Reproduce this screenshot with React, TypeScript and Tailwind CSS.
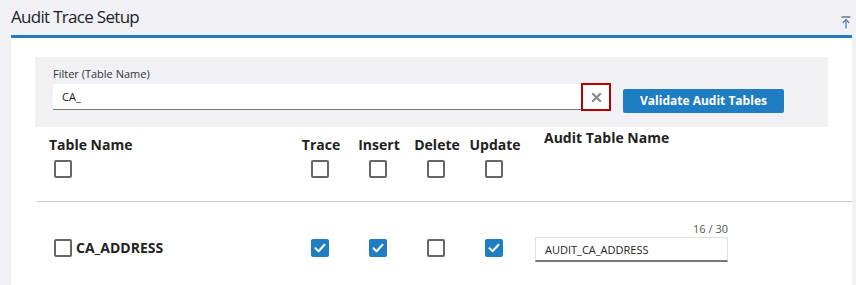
import { useState } from 'react'

const FONT = "font-['Open_Sans','Noto_Sans',sans-serif]"

function Checkbox({ checked, onChange }: { checked: boolean; onChange: () => void }) {
  return (
    <button
      type="button"
      onClick={onChange}
      className={
        checked
          ? 'flex h-[18px] w-[18px] items-center justify-center rounded-[2px] bg-[#1f7dc1]'
          : 'h-[18px] w-[18px] rounded-[2px] border-2 border-[#666666] bg-white'
      }
    >
      {checked && (
        <svg width="14" height="14" viewBox="0 0 14 14" fill="none">
          <path d="M2.5 7.2 L5.6 10.2 L11.5 3.8" stroke="white" strokeWidth="2" strokeLinecap="round" strokeLinejoin="round" />
        </svg>
      )}
    </button>
  )
}

const FLAGS = ['Trace', 'Insert', 'Delete', 'Update'] as const

export default function App() {
  const [filter, setFilter] = useState('CA_')
  const [headerAll, setHeaderAll] = useState([false, false, false, false])
  const [rowSelected, setRowSelected] = useState(false)
  const [flags, setFlags] = useState([true, true, false, true])
  const [auditName, setAuditName] = useState('AUDIT_CA_ADDRESS')
  const [allSelected, setAllSelected] = useState(false)

  return (
    <div className={`${FONT} h-[285px] w-[856px] overflow-hidden bg-[#f0f0f5] pl-[11px] pr-[4px] text-[#222]`}>
      {/* Title bar */}
      <div className="flex h-[35px] items-start justify-between">
        <h1 className="pt-[5px] text-[17px] leading-[24px] font-medium tracking-[-0.7px] text-[#1e1e1e]">Audit Trace Setup</h1>
        <svg className="mt-[16px] mr-[1px]" width="10" height="13" viewBox="0 0 10 13" fill="none">
          <path d="M0.5 1 H9.5" stroke="#555" strokeWidth="1.2" />
          <path d="M5 3.5 V12.5" stroke="#3a7fb5" strokeWidth="1.2" />
          <path d="M1.8 7 L5 3.6 L8.2 7" stroke="#3a7fb5" strokeWidth="1.2" fill="none" />
        </svg>
      </div>

      {/* Panel */}
      <div className="h-[250px] border-t-[3px] border-[#1f7dc1] bg-white pt-[19px]">
        {/* Filter box */}
        <div className="ml-[24px] w-[793px] bg-[#f0f0f5] pt-[9px] pb-[14px] pl-[18px]">
          <div className="text-[11px] leading-[15px] text-[#333]">Filter (Table Name)</div>
          <div className="mt-[2px] flex items-start">
            <input
              value={filter}
              onChange={(e) => setFilter(e.target.value)}
              className="mt-[1px] h-[26px] w-[528px] border-b border-[#777] bg-white pl-[9px] text-[11px] text-[#222] outline-none"
            />
            <button
              type="button"
              onClick={() => setFilter('')}
              className="flex h-[28px] w-[30px] items-center justify-center border-2 border-[#b80000] bg-white"
            >
              <svg width="11" height="11" viewBox="0 0 11 11">
                <path d="M1.2 1.2 L9.8 9.8 M9.8 1.2 L1.2 9.8" stroke="#8a8a8a" strokeWidth="2.2" />
              </svg>
            </button>
            <button
              type="button"
              className="mt-[6px] ml-[12px] h-[24px] w-[161px] rounded-[2px] bg-[#1f7dc1] text-[12px] font-bold text-white"
            >
              Validate Audit Tables
            </button>
          </div>
        </div>

        {/* Header row */}
        <div className="flex h-[74px] pt-[8px]">
          <div className="w-[281px] pl-[38px]">
            <div className="text-[14px] leading-[20px] font-bold">Table Name</div>
            <div className="mt-[3px] pl-[5px]">
              <Checkbox checked={allSelected} onChange={() => setAllSelected(!allSelected)} />
            </div>
          </div>
          {FLAGS.map((f, i) => (
            <div key={f} className="flex w-[58px] flex-col items-center">
              <div className="text-[14px] leading-[20px] font-bold">{f}</div>
              <div className="mt-[3px] pr-[2px]">
                <Checkbox
                  checked={headerAll[i]}
                  onChange={() => setHeaderAll(headerAll.map((v, j) => (j === i ? !v : v)))}
                />
              </div>
            </div>
          ))}
          <div className="pl-[20px] text-[14px] leading-[20px] font-bold -mt-[7px]">Audit Table Name</div>
        </div>

        <div className="ml-[26px] border-t border-[#c8c8c8]" />

        {/* Data row */}
        <div className="flex items-center pt-[20px]">
          <div className="flex w-[281px] items-center gap-[4px] pt-[12px] pl-[43px]">
            <Checkbox checked={rowSelected} onChange={() => setRowSelected(!rowSelected)} />
            <span className="text-[14px] leading-[20px] font-bold">CA_ADDRESS</span>
          </div>
          {flags.map((v, i) => (
            <div key={i} className="flex w-[58px] justify-center pt-[12px] pr-[2px]">
              <Checkbox checked={v} onChange={() => setFlags(flags.map((x, j) => (j === i ? !x : x)))} />
            </div>
          ))}
          <div className="ml-[11px] flex w-[193px] flex-col items-end">
            <span className="text-[11px] leading-[14px] text-[#555]">
              {auditName.length} / 30
            </span>
            <input
              value={auditName}
              maxLength={30}
              onChange={(e) => setAuditName(e.target.value)}
              className="mt-[1px] h-[25px] w-full border border-b-2 border-[#e0e0e0] border-b-[#777] bg-white pl-[9px] text-[11px] text-[#222] outline-none"
            />
          </div>
        </div>
      </div>
    </div>
  )
}
